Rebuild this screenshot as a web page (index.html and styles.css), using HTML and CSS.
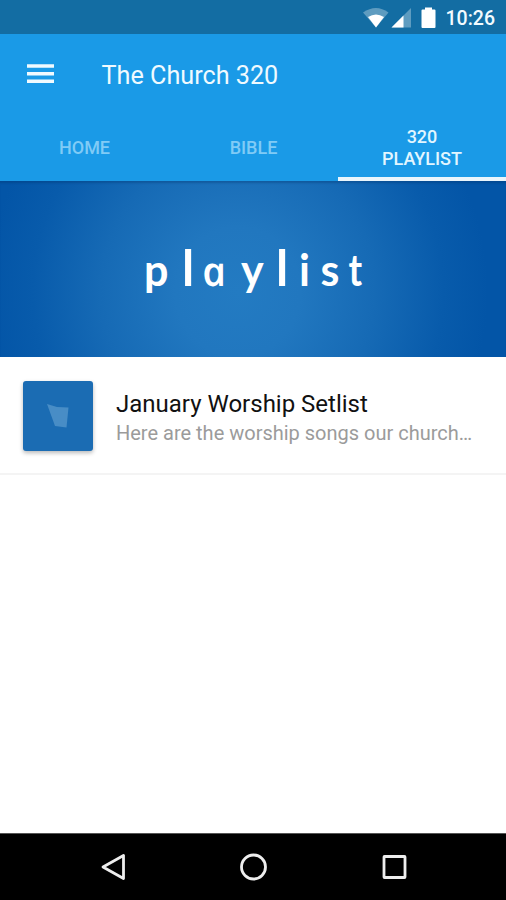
FILE: index.html
```html
<!DOCTYPE html>
<html lang="en">
<head>
<meta charset="utf-8">
<title>The Church 320</title>
<link rel="stylesheet" href="styles.css">
</head>
<body>
<div class="status">
  <svg class="status-icons" width="80" height="34" viewBox="0 0 80 34">
    <path class="dim" d="M2 12.5Q15 3.500 27.500 12.500L15 27.500Z"/>
    <path class="lit" d="M7 17Q15 12 23 17L15 27.500Z"/>
    <path class="dim" d="M50 8V27.500H30.500Z"/>
    <path class="lit" d="M42.500 15.500V27.500H30.500Z"/>
    <path class="lit" d="M64 7.500h7v2h2.500q1 0 1 1v16.500q0 1-1 1h-12q-1 0-1-1v-16.500q0-1 1-1h2.500z"/>
  </svg>
  <span class="clock">10:26</span>
</div>
<header class="appbar">
  <div class="toolbar">
    <svg class="menu" width="27" height="20" viewBox="0 0 27 20"><path d="M0 2h27M0 9.700h27M0 17.300h27"/></svg>
    <h1 class="title">The Church 320</h1>
  </div>
  <nav class="tabs">
    <a class="tab">HOME</a>
    <a class="tab">BIBLE</a>
    <a class="tab active">320<br>PLAYLIST</a>
  </nav>
</header>
<section class="banner">
  <svg class="word" width="506" height="176" viewBox="0 0 506 176">
    <text y="104.500"><tspan x="144">p</tspan><tspan class="tall" x="182">l</tspan></text>
    <text class="round" transform="translate(204.500 104.500) skewX(12)">a</text>
    <text y="104.500"><tspan x="241">y</tspan><tspan class="tall" x="276">l</tspan><tspan x="299">i</tspan><tspan x="320.500">s</tspan></text>
    <text class="cross" transform="translate(348.500 104.500) scale(.85 1)">t</text>
  </svg>
</section>
<main class="list">
  <article class="item">
    <div class="thumb"><svg width="70" height="70" viewBox="0 0 70 70"><path d="M24 23L34 26L45.500 26.500L43.500 46.500L32 45Z"/></svg></div>
    <div class="copy">
      <h2 class="name">January Worship Setlist</h2>
      <p class="desc">Here are the worship songs our church…</p>
    </div>
  </article>
</main>
<footer class="navbar">
  <svg width="28" height="30" viewBox="0 0 28 30"><path d="M5 15L25.500 3.500V26.500Z"/></svg>
  <svg width="30" height="30" viewBox="0 0 30 30"><circle cx="15.500" cy="15" r="12"/></svg>
  <svg width="28" height="30" viewBox="0 0 28 30"><rect x="4" y="4.500" width="21" height="21" rx=".5"/></svg>
</footer>
</body>
</html>
```
FILE: styles.css
```css
* { box-sizing: border-box; margin: 0; padding: 0; }
body {
  width: 506px;
  height: 900px;
  display: flex;
  flex-direction: column;
  background: #fff;
  font-family: Roboto, sans-serif;
  overflow: hidden;
}
svg { display: block; }
.status {
  height: 34px;
  background: #136da3;
  display: flex;
  align-items: center;
  justify-content: flex-end;
  padding-right: 11px;
}
.status-icons { margin-right: 5px; }
.lit { fill: #fff; }
.dim { fill: #fff; opacity: .32; }
.clock { color: #f2fbff; font-size: 19.500px; font-weight: 500; line-height: 34px; padding-top: 3px; }
.appbar { height: 147px; background: #1a9ae7; }
.toolbar { height: 80px; display: flex; align-items: center; padding-left: 26.500px; }
.menu path { stroke: #f0faff; stroke-width: 3.500; }
.title { margin-left: 48px; padding-top: 3px; color: #f0faff; font-size: 25.200px; font-weight: 400; line-height: 30px; }
.tabs { height: 67px; display: grid; grid-template-columns: 169px 169px 168px; }
.tab {
  display: flex;
  align-items: center;
  justify-content: center;
  text-align: center;
  font-size: 18px;
  font-weight: 500;
  line-height: 22px;
  color: #80cbf6;
  border-bottom: 4px solid transparent;
  padding-top: 5px;
}
.tab.active { color: #e2f6ff; border-bottom-color: #e9f5fc; }
.banner {
  height: 176px;
  background: radial-gradient(ellipse 250px 260px at 47% 63%, #237bc2 0%, #2177bf 25%, #166ab5 55%, #085bab 82%, #0355a7 100%);
  box-shadow: inset 0 3px 2px -1px rgba(0, 45, 100, .3);
}
.word { fill: #fff; font-family: Lato, sans-serif; font-size: 43px; font-weight: 700; }
.word .tall { font-size: 49px; }
.word .round { font-family: "Open Sans", sans-serif; font-size: 41px; font-style: italic; font-weight: 600; }
.list { flex: 1; }
.item { height: 118px; display: flex; align-items: center; gap: 23px; padding-left: 23px; padding-top: 2px; border-bottom: 2px solid #f4f4f4; }
.thumb { width: 70px; height: 70px; border-radius: 3px; background: #1b6cb3; box-shadow: 0 2px 4px rgba(0, 0, 0, .28); }
.thumb path { fill: #488dc6; }
.copy { padding-top: 4px; }
.name { font-size: 24px; font-weight: 400; line-height: 29px; color: #111; }
.desc { font-size: 20px; line-height: 28px; color: #9b9b9b; }
.navbar {
  height: 67px;
  background: #000;
  border-top: 1px solid #555;
  display: flex;
  align-items: center;
  justify-content: center;
  gap: 112px;
}
.navbar svg { fill: none; stroke: #eee; stroke-width: 2.800; stroke-linejoin: round; }
```
